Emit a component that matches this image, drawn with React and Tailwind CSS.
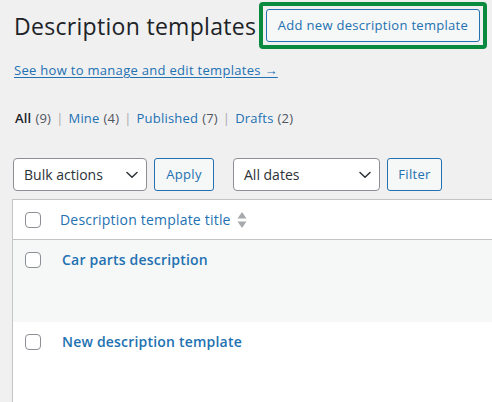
import React from "react";

function Chevron() {
  return (
    <svg width="12" height="8" viewBox="0 0 12 8" fill="none" className="shrink-0">
      <path d="M1 1.5 L6 6.2 L11 1.5" stroke="#2c3338" strokeWidth="1.5" strokeLinecap="round" strokeLinejoin="round" />
    </svg>
  );
}

function Checkbox() {
  return <div className="w-4 h-4 shrink-0 rounded-[4px] border border-[#8c8f94] bg-white" />;
}

function SortIcon() {
  return (
    <svg width="10" height="18" viewBox="0 0 10 18" className="ml-[6px] shrink-0">
      <path d="M5 1 L9.5 7.5 L0.5 7.5 Z" fill="#a7aaad" />
      <path d="M5 17 L9.5 10.5 L0.5 10.5 Z" fill="#a7aaad" />
    </svg>
  );
}

export default function App() {
  return (
    <div className="w-[492px] h-[402px] overflow-hidden bg-[#f0f0f1] font-['Open_Sans','Noto_Sans',sans-serif] text-[#3c434a]">
      <div className="pl-3">
        {/* Heading row */}
        <div className="flex items-center pt-[2px]">
          <h1 className="w-[247px] pl-[2px] text-[23px] leading-[30px] font-normal tracking-[0.3px] text-[#1d2327] whitespace-nowrap">
            Description templates
          </h1>
          <div className="rounded-[4px] border-4 border-[#0a8a3e] p-[3px]">
            <div className="w-[214px] h-[33px] flex items-center justify-center rounded-[3px] border border-[#2271b1] bg-[#f6f7f7] text-[13px] tracking-[0.3px] text-[#2271b1] whitespace-nowrap">
              Add new description template
            </div>
          </div>
        </div>

        {/* Help link */}
        <div className="mt-[8px] pl-[2px]">
          <span className="text-[13px] leading-[18px] tracking-[0.3px] text-[#2271b1] underline underline-offset-2">
            See how to manage and edit templates →
          </span>
        </div>

        {/* Status filters */}
        <div className="mt-[28px] pl-[3px] flex items-center text-[13px] leading-[18px] tracking-[0.2px] whitespace-nowrap">
          <span className="font-semibold text-[#1d2327]">All</span>
          <span className="ml-[4px] text-[#50575e]">(9)</span>
          <span className="mx-[5px] text-[#a7aaad]">|</span>
          <span className="text-[#2271b1]">Mine</span>
          <span className="ml-[4px] text-[#50575e]">(4)</span>
          <span className="mx-[5px] text-[#a7aaad]">|</span>
          <span className="text-[#2271b1]">Published</span>
          <span className="ml-[4px] text-[#50575e]">(7)</span>
          <span className="mx-[5px] text-[#a7aaad]">|</span>
          <span className="text-[#2271b1]">Drafts</span>
          <span className="ml-[4px] text-[#50575e]">(2)</span>
        </div>

        {/* Controls */}
        <div className="mt-[31px] flex items-center pl-[1px]">
          <div className="w-[134px] h-[33px] flex items-center justify-between pl-[10px] pr-[8px] rounded-[4px] border border-[#8c8f94] bg-white text-[14px] text-[#2c3338] whitespace-nowrap">
            <span>Bulk actions</span>
            <Chevron />
          </div>
          <div className="ml-[7px] w-[60px] h-[33px] flex items-center justify-center rounded-[3px] border border-[#2271b1] bg-[#f6f7f7] text-[13px] tracking-[0.3px] text-[#2271b1]">
            Apply
          </div>
          <div className="ml-[19px] w-[147px] h-[33px] flex items-center justify-between pl-[10px] pr-[8px] rounded-[4px] border border-[#8c8f94] bg-white text-[14px] text-[#2c3338] whitespace-nowrap">
            <span>All dates</span>
            <Chevron />
          </div>
          <div className="ml-[7px] w-[55px] h-[33px] flex items-center justify-center rounded-[3px] border border-[#2271b1] bg-[#f6f7f7] text-[13px] tracking-[0.3px] text-[#2271b1]">
            Filter
          </div>
        </div>

        {/* Table */}
        <div className="mt-[8px] border-l border-t border-[#c3c4c7] bg-white">
          <div className="h-[40px] flex items-center pl-[12px] border-b border-[#c3c4c7]">
            <Checkbox />
            <span className="ml-[19px] text-[14px] tracking-[0.2px] text-[#2271b1] whitespace-nowrap">Description template title</span>
            <SortIcon />
          </div>
          <div className="h-[82px] bg-[#f6f7f7] pl-[12px] pt-[12px] flex items-start">
            <Checkbox />
            <span className="ml-[21px] -mt-[2px] text-[14px] leading-[20px] font-semibold tracking-[0.2px] text-[#2271b1] whitespace-nowrap">
              Car parts description
            </span>
          </div>
          <div className="h-[90px] bg-white pl-[12px] pt-[12px] flex items-start">
            <Checkbox />
            <span className="ml-[21px] -mt-[2px] text-[14px] leading-[20px] font-semibold tracking-[0.2px] text-[#2271b1] whitespace-nowrap">
              New description template
            </span>
          </div>
        </div>
      </div>
    </div>
  );
}
